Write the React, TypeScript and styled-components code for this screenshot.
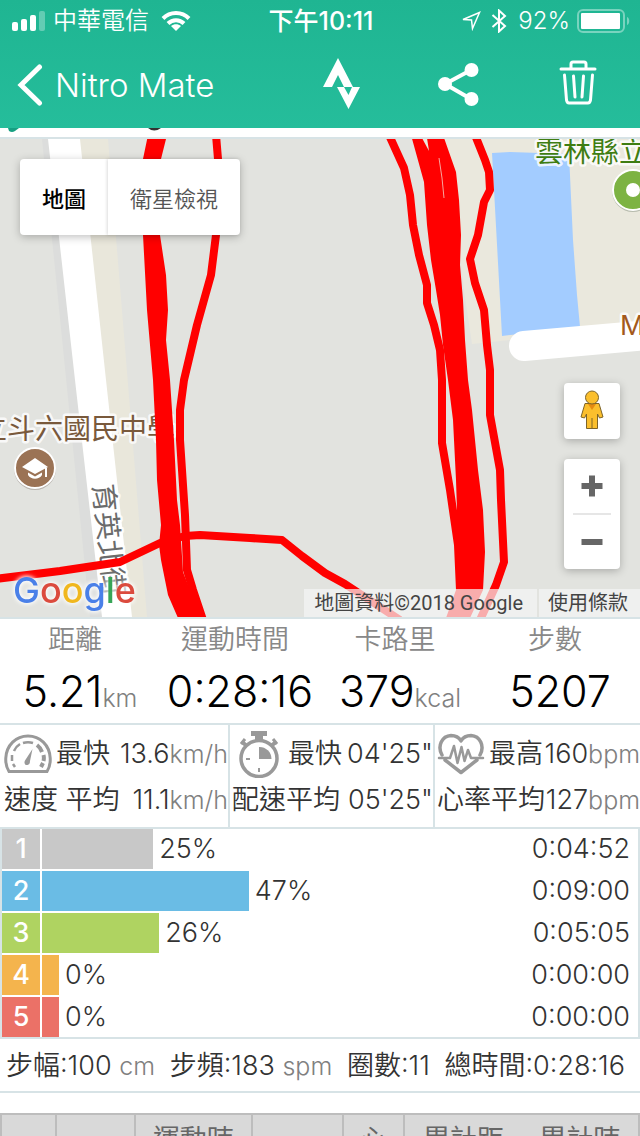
import React from "react";
import styled, { createGlobalStyle } from "styled-components";

const LINE = "#d7e3e6";
const LATIN = `Inter, "Noto Sans CJK TC", sans-serif`;

const GlobalStyle = createGlobalStyle`
  * { box-sizing: border-box; }
  body { margin: 0; background: #fff; color: #333; font-family: ${LATIN}; font-weight: 350; }
  button { border: 0; padding: 0; background: none; color: inherit; font: inherit; cursor: pointer; }
  svg { display: block; flex: none; }
`;

const Screen = styled.div`
  height: 100vh;
  overflow: hidden;
  display: flex;
  flex-direction: column;
  > * { flex: none; }
`;

const Header = styled.header`
  background: linear-gradient(#1fb592, #25bd9b);
  color: #fff;
  height: 128px;
`;

const StatusBar = styled.div`
  height: 42px;
  padding: 0 10px 0 12px;
  display: grid;
  grid-template-columns: 1fr auto 1fr;
  align-items: center;
  font-size: 24px;
  line-height: 40px;
`;

const StatusGroup = styled.div<{ $end?: boolean }>`
  display: flex;
  align-items: center;
  gap: 7px;
  justify-content: ${(p) => (p.$end ? "flex-end" : "flex-start")};
`;

const Clock = styled.time`
  font-size: 25px;
  font-weight: 500;
`;

const NavBar = styled.nav`
  height: 86px;
  padding: 0 43px 0 17px;
  display: flex;
  align-items: center;
  justify-content: space-between;
`;

const BackButton = styled.button`
  display: flex;
  align-items: center;
  gap: 12px;
  font-size: 33px;
  line-height: 40px;
`;

const NavActions = styled.div`
  display: flex;
  align-items: center;
  gap: 76px;
`;

const TitleStrip = styled.div`
  height: 11px;
  border-bottom: 2px solid ${LINE};
`;

const MapArea = styled.section`
  position: relative;
  height: 480px;
  overflow: hidden;
  border-bottom: 2px solid ${LINE};
  background: #e2e3df;
`;

const MapDrawing = styled.svg`
  width: 100%;
  height: 100%;
`;

const MapLabel = styled.text<{ $size: number }>`
  font-family: ${LATIN};
  font-size: ${(p) => p.$size}px;
  font-weight: 400;
  paint-order: stroke;
  stroke: rgba(255, 255, 255, 0.8);
  stroke-width: 5px;
  stroke-linejoin: round;
`;

const MapTypes = styled.div`
  position: absolute;
  top: 20px;
  left: 20px;
  display: flex;
  background: #fff;
  border-radius: 4px;
  box-shadow: 0 2px 8px rgba(0, 0, 0, 0.25);
`;

const MapTypeButton = styled.button<{ $active?: boolean }>`
  height: 76px;
  padding: 0 22px;
  font-size: 22px;
  font-weight: ${(p) => (p.$active ? 500 : 350)};
  color: ${(p) => (p.$active ? "#000" : "#555")};
  & + & { box-shadow: -1px 0 3px rgba(0, 0, 0, 0.14); }
`;

const MapControls = styled.div`
  position: absolute;
  right: 20px;
  bottom: 48px;
  width: 56px;
  display: flex;
  flex-direction: column;
  gap: 20px;
`;

const ControlCard = styled.div`
  background: #fff;
  border-radius: 4px;
  box-shadow: 0 2px 8px rgba(0, 0, 0, 0.25);
`;

const ControlButton = styled.button<{ $h: number }>`
  width: 100%;
  height: ${(p) => p.$h}px;
  display: flex;
  align-items: center;
  justify-content: center;
`;

const ControlDivider = styled.hr`
  margin: 0 9px;
  border: 0;
  height: 2px;
  background: #e6e6e6;
`;

const GoogleMark = styled.div`
  position: absolute;
  left: 13px;
  bottom: 5px;
  font-size: 36px;
  line-height: 44px;
  font-weight: 500;
  filter: drop-shadow(0 0 2px rgba(255, 255, 255, 0.9)) drop-shadow(0 0 2px rgba(255, 255, 255, 0.8));
`;

const Tint = styled.span<{ $c: string }>`
  color: ${(p) => p.$c};
`;

const Attribution = styled.div`
  position: absolute;
  right: 0;
  bottom: 0;
  display: flex;
  gap: 2px;
  font: 400 20px/28px Roboto, "Noto Sans CJK TC", sans-serif;
  color: #444;
`;

const Credit = styled.span`
  padding: 0 14px 0 10px;
  background: rgba(245, 245, 245, 0.7);
`;

const Terms = styled.a`
  padding: 0 12px 0 9px;
  background: rgba(245, 245, 245, 0.7);
  color: inherit;
  text-decoration: none;
`;

const Totals = styled.section`
  display: grid;
  grid-template-columns: repeat(4, 1fr);
  height: 106px;
  border-bottom: 2px solid ${LINE};
  text-align: center;
`;

const TotalLabel = styled.div`
  padding-right: 10px;
  font-size: 27px;
  line-height: 42px;
  color: #888;
`;

const TotalValue = styled.div`
  font-size: 43px;
  line-height: 60px;
  color: #000;
  white-space: nowrap;
`;

const Unit = styled.span`
  font-size: 25px;
  font-weight: 300;
  color: #808080;
`;

const Vitals = styled.section`
  display: grid;
  grid-template-columns: 228fr 205fr 207fr;
  height: 104px;
  border-bottom: 2px solid ${LINE};
`;

const Vital = styled.div`
  padding: 6px 0 0 4px;
  min-width: 0;
  & + & { border-left: 2px solid ${LINE}; padding-left: 2px; }
`;

const VitalRow = styled.div`
  display: flex;
  align-items: center;
  justify-content: space-between;
  height: 46px;
  font-size: 27px;
  line-height: 46px;
  white-space: nowrap;
`;

const VitalName = styled.span`
  display: flex;
  align-items: center;
  gap: 4px;
`;

const Zones = styled.section`
  padding: 0 0 0 2px;
  display: flex;
  flex-direction: column;
  gap: 2px;
  border: solid ${LINE};
  border-width: 0 2px 2px 0;
  box-shadow: inset 2px 0 ${LINE};
`;

const Zone = styled.div`
  height: 40px;
  display: grid;
  grid-template-columns: 38px 1fr auto;
  gap: 2px;
  font-size: 27px;
  line-height: 40px;
`;

const ZoneBadge = styled.span<{ $c: string }>`
  background: ${(p) => p.$c};
  color: #fff;
  font-weight: 500;
  text-align: center;
`;

const ZoneTrack = styled.div`
  display: flex;
  gap: 6px;
`;

const ZoneBar = styled.div<{ $c: string }>`
  min-width: 17px;
  background: ${(p) => p.$c};
`;

const ZoneTime = styled.span`
  padding-right: 8px;
`;

const Summary = styled.section`
  height: 54px;
  padding: 0 15px 0 6px;
  display: flex;
  justify-content: space-between;
  border-bottom: 2px solid ${LINE};
  font-size: 27px;
  line-height: 54px;
  white-space: nowrap;
`;

const LapTable = styled.table`
  width: 100%;
  margin-top: 20px;
  table-layout: fixed;
  border-collapse: separate;
  border-spacing: 0;
  background: #d9d9d9;
  border: 2px solid #bdbdbd;
`;

const LapHead = styled.th<{ $w: number; $open?: boolean }>`
  width: ${(p) => p.$w}%;
  height: 80px;
  padding: 5px 0 0;
  vertical-align: top;
  font-size: 27px;
  line-height: 40px;
  font-weight: 400;
  color: #666;
  border-right: ${(p) => (p.$open ? "0" : "2px solid #bdbdbd")};
`;

const zones = [
  { n: 1, color: "#c8c8c8", share: 25, bar: 22.8, time: "0:04:52" },
  { n: 2, color: "#6abce5", share: 47, bar: 42.4, time: "0:09:00" },
  { n: 3, color: "#afd361", share: 26, bar: 24, time: "0:05:05" },
  { n: 4, color: "#f4b44d", share: 0, bar: 0, time: "0:00:00" },
  { n: 5, color: "#eb7167", share: 0, bar: 0, time: "0:00:00" },
];

const totals = [
  { label: "距離", value: "5.21", unit: "km" },
  { label: "運動時間", value: "0:28:16" },
  { label: "卡路里", value: "379", unit: "kcal" },
  { label: "步數", value: "5207" },
];

const SpeedIcon = () => (
  <svg width="48" height="40" viewBox="0 0 48 40" fill="none" stroke="#999">
    <path d="M5 37.5H43C45.500 33.500 46.500 29 46.200 24C45.500 11 36 2 24 2S2.500 11 1.800 24C1.500 29 2.500 33.500 5 37.500Z" strokeWidth="3" />
    <path d="M9 30L11 33M8 21V27M10 17C11.500 13.500 13.500 11.500 16 10M19 9C22 8 26 8 29 9" strokeWidth="2.500" />
    <path d="M33 11C35 12.500 37 15 38 18M39.500 21C40 23 40 25 39.500 27M39 29L37 33" strokeWidth="4" />
    <path d="M28.500 15L21 26.500C19.500 29.500 21.500 31.500 23.500 31C25.500 30.500 26 29 26 27Z" fill="#999" stroke="none" />
  </svg>
);

const StopwatchIcon = () => (
  <svg width="52" height="48" viewBox="-6 0 52 48" fill="none" stroke="#999">
    <circle cx="21" cy="28.500" r="18" strokeWidth="3.500" />
    <path d="M13 1H29V6H25V10H17V6H13Z" fill="#999" stroke="none" />
    <path d="M4 12L9 16M38 12L33 16" strokeWidth="4" />
    <path d="M3 14L7 9M39 14L35 9" strokeWidth="3" />
    <path d="M21 17A12 12 0 0 1 33.500 29H21Z" fill="#999" stroke="none" />
    <path d="M8 29H12M21 38V42" strokeWidth="2" />
  </svg>
);

const HeartIcon = () => (
  <svg width="48" height="42" viewBox="0 0 48 42" fill="none" stroke="#999" strokeLinejoin="round" strokeLinecap="round">
    <path d="M5 22C0 13 5 3 14 2.500C18.500 2.500 22 4.500 24 8C26 4.500 30 2.500 34 2.500C43 3 48 13 43 22M8 27L24 39.500L40 27" strokeWidth="3.500" />
    <path d="M2 25H13L17 13L20.500 30L24.500 14L27.500 28L31 17L34 25H46" strokeWidth="2.500" />
  </svg>
);

const vitals = [
  { icon: <SpeedIcon />, top: "最快", bottom: "速度 平均", best: "13.6", avg: "11.1", unit: "km/h" },
  { icon: <StopwatchIcon />, top: "最快", bottom: "配速平均", best: "04'25\"", avg: "05'25\"", unit: "" },
  { icon: <HeartIcon />, top: "最高", bottom: "心率平均", best: "160", avg: "127", unit: "bpm" },
];

function RouteMap() {
  return (
    <MapDrawing viewBox="0 139 640 478" preserveAspectRatio="xMidYMid slice" role="img" aria-label="地圖">
      <rect x="0" y="139" width="640" height="478" fill="#e2e3df" />
      <path d="M42 139H50L104 617H90Z" fill="#dcdddc" />
      <path d="M78 139H108L147 617H130Z" fill="#e9e7db" />
      <path d="M48 139H80L106 380L132 617H102L75 380Z" fill="#fff" />
      <path d="M445 139H640V330L510 340L472 344L464 290Z" fill="#eae8dd" />
      <path d="M492 153L510 152L569 154L573 240L577 295L580 327L502 336Z" fill="#a3ccff" />
      <path d="M524 346L660 334" stroke="#fff" strokeWidth="30" strokeLinecap="round" />

      <MapLabel $size={28} x="-21" y="439" fill="#79593c">立斗六國民中學</MapLabel>
      <MapLabel $size={28} x="535" y="162" fill="#3f7d12">雲林縣立</MapLabel>
      <MapLabel $size={27} x="620" y="335" fill="#a35a1c">M</MapLabel>
      <MapLabel $size={28} x="0" y="0" fill="#6b6b6b" transform="translate(93 485) rotate(84)">育英北街</MapLabel>

      <circle cx="35" cy="469" r="21" fill="#b9b4ae" />
      <circle cx="35" cy="468" r="20" fill="#9b7355" stroke="#fff" strokeWidth="2" />
      <path d="M22 467L35 458L48 467L35 474ZM28 472.500L35 476.500L42 472.500V475C39 480 31 480 28 475ZM45 468H47V477H45Z" fill="#fff" />
      <circle cx="633" cy="191" r="21" fill="#b8bcae" />
      <circle cx="633" cy="190" r="20" fill="#7db343" stroke="#fff" strokeWidth="2" />
      <circle cx="633" cy="190" r="7" fill="#fff" />

      <path d="M148 135H167L161 159L160 235L166 275L168 310L166 340L170 380L174 440L177 500L180 525L183 572L190 590L206 618H178L168 595L161 560L159 545L161 525L157 480L156 440L153 380L147 310L143 235V159Z" fill="#f00" />
      <path d="M411 135L443 135L456 172L459 200L461 235L460 265L463 300L465 340L468 380L472 410L475 440L478 470L483 510L485 552L483 590L470 618H446L456 590L457 510L456 480L453 420L448 380L443 345L440 315L436 290L431 260L427 225L424 182Z" fill="#f00" />
      <path d="M422 138H427L429 151Z" fill="#eae8dd" />
      <path d="M439 158L442 178L444 198" fill="none" stroke="#f7a79f" strokeWidth="1" />
      <g fill="none" stroke="#f00" strokeWidth="8" strokeLinejoin="round">
        <path d="M216 135L218 159L216 235L211 275L197 325L184 380L180 410V440L185 515L187 570L193 590L203 620" />
        <path d="M-5 579L60 571L120 562L160 543L185 536L200 535L250 538L282 540L302 556L325 573L345 584L400 620" />
        <path d="M389 135L404 168L410 195L413 225L419 255L427 285V303L434 325L440 350L442 380V443L450 490L458 545L460 590" />
        <path d="M475 135L485 160L489 172L490 190L484 202L478 235L470 259L475 283L484 310L487 345L490 370V415L500 470L501 500L504 562L496 585L480 620" />
      </g>
    </MapDrawing>
  );
}

export default function App() {
  return (
    <Screen>
      <GlobalStyle />
      <Header>
        <StatusBar>
          <StatusGroup>
            <svg width="34" height="20" viewBox="0 0 34 20" fill="#fff">
              <rect y="11" width="6" height="9" rx="2" />
              <rect x="9" y="8" width="6" height="12" rx="2" />
              <rect x="18" y="4" width="6" height="16" rx="2" />
              <rect x="27" width="6" height="20" rx="2" opacity=".3" />
            </svg>
            中華電信
            <svg width="40" height="20" viewBox="-6 0 40 20" fill="none" stroke="#fff" strokeWidth="4">
              <path d="M1 7.500C8 .300 20 .300 27 7.500M6 12.500C10.500 8 17.500 8 22 12.500" />
              <path d="M9 15C12 12.500 16 12.500 19 15L14 20Z" fill="#fff" stroke="none" />
            </svg>
          </StatusGroup>
          <Clock>下午10:11</Clock>
          <StatusGroup $end>
            <svg width="24" height="20" viewBox="0 0 24 20" fill="none" stroke="#fff" strokeWidth="1.500" strokeLinejoin="miter">
              <path d="M3 8.500L19.500 1.500L12.500 17.500L11.500 9Z" />
            </svg>
            <svg width="20" height="24" viewBox="0 0 20 24" fill="none" stroke="#fff" strokeWidth="2">
              <path d="M1.500 6L14 17L8 22.500V1.500L14 7L1.500 18" />
            </svg>
            92%
            <svg width="53" height="24" viewBox="0 0 53 24" fill="#fff">
              <rect x="1" y="1" width="46" height="22" rx="5" fill="none" stroke="#fff" strokeWidth="2" opacity=".4" />
              <rect x="4" y="4" width="39" height="16" rx="1" />
              <path d="M50 8C53 9 53 15 50 16Z" opacity=".4" />
            </svg>
          </StatusGroup>
        </StatusBar>
        <NavBar>
          <BackButton>
            <svg width="26" height="44" viewBox="0 0 26 44" fill="none" stroke="#fff" strokeWidth="5" strokeLinecap="round" strokeLinejoin="miter">
              <path d="M22.500 4L4 22L22.500 40" />
            </svg>
            Nitro Mate
          </BackButton>
          <NavActions>
            <button aria-label="Strava">
              <svg width="38" height="58" viewBox="324 55 38 58" fill="#fff">
                <path d="M339 57L354 86H345L339 74L333 86H324ZM338 86H345L349.500 94L353 86H361L349.500 108Z" />
              </svg>
            </button>
            <button aria-label="分享">
              <svg width="46" height="48" viewBox="437 59 46 48" fill="#fff">
                <circle cx="445" cy="82" r="7" />
                <circle cx="471.500" cy="68" r="7" />
                <circle cx="471.500" cy="97" r="7" />
                <path d="M471 68L445 82L471 97" fill="none" stroke="#fff" strokeWidth="4" />
              </svg>
            </button>
            <button aria-label="刪除">
              <svg width="38" height="50" viewBox="559 59 38 50" fill="none" stroke="#fff" strokeWidth="3" strokeLinecap="round" strokeLinejoin="round">
                <path d="M561 68H595M571 67V63Q571 61 573 61H584Q586 61 586 63V67M564.500 74L566.500 99Q567 102 569 102H588Q590 102 590.500 99L592.500 74M573.500 75L575 96M583.500 75L582 96" />
              </svg>
            </button>
          </NavActions>
        </NavBar>
      </Header>
      <TitleStrip>
        <svg width="180" height="6" viewBox="0 0 180 6">
          <path d="M8 0H19L15 3Q12 5 9 3Z" fill="#17a082" />
          <path d="M148 0H161Q154 5 148 0Z" fill="#333" />
        </svg>
      </TitleStrip>

      <MapArea>
        <RouteMap />
        <MapTypes>
          <MapTypeButton $active>地圖</MapTypeButton>
          <MapTypeButton>衛星檢視</MapTypeButton>
        </MapTypes>
        <MapControls>
          <ControlCard>
            <ControlButton $h={56} aria-label="街景服務">
              <svg width="24" height="42" viewBox="0 0 24 42" fill="#fbbf2d" stroke="#7d6428" strokeWidth="1">
                <path d="M5 13.500H19L23 27L19.500 28L17.500 24V38.500H6.500V24L4.500 28L1 27Z" />
                <path d="M8 14H16L12 20Z" fill="#e58b12" stroke="none" />
                <path d="M12 28V38" />
                <circle cx="12" cy="7.500" r="6.500" />
              </svg>
            </ControlButton>
          </ControlCard>
          <ControlCard>
            <ControlButton $h={54} aria-label="放大">
              <svg width="22" height="22" viewBox="0 0 22 22" fill="#666">
                <path d="M8 0.500H14V8H21.500V14H14V21.500H8V14H0.500V8H8Z" />
              </svg>
            </ControlButton>
            <ControlDivider />
            <ControlButton $h={54} aria-label="縮小">
              <svg width="22" height="6" viewBox="0 0 22 6" fill="#666">
                <rect x="0.500" width="21" height="6" />
              </svg>
            </ControlButton>
          </ControlCard>
        </MapControls>
        <GoogleMark>
          <Tint $c="#4a80e8">G</Tint>
          <Tint $c="#db4b3e">o</Tint>
          <Tint $c="#f0b71e">o</Tint>
          <Tint $c="#4a80e8">g</Tint>
          <Tint $c="#38a557">l</Tint>
          <Tint $c="#db4b3e">e</Tint>
        </GoogleMark>
        <Attribution>
          <Credit>地圖資料©2018 Google</Credit>
          <Terms href="#terms">使用條款</Terms>
        </Attribution>
      </MapArea>

      <Totals>
        {totals.map((t) => (
          <div key={t.label}>
            <TotalLabel>{t.label}</TotalLabel>
            <TotalValue>
              {t.value}
              {t.unit && <Unit>{t.unit}</Unit>}
            </TotalValue>
          </div>
        ))}
      </Totals>

      <Vitals>
        {vitals.map((v) => (
          <Vital key={v.bottom}>
            <VitalRow>
              <VitalName>
                {v.icon}
                {v.top}
              </VitalName>
              <span>
                {v.best}
                <Unit>{v.unit}</Unit>
              </span>
            </VitalRow>
            <VitalRow>
              <VitalName>{v.bottom}</VitalName>
              <span>
                {v.avg}
                <Unit>{v.unit}</Unit>
              </span>
            </VitalRow>
          </Vital>
        ))}
      </Vitals>

      <Zones>
        {zones.map((z) => (
          <Zone key={z.n}>
            <ZoneBadge $c={z.color}>{z.n}</ZoneBadge>
            <ZoneTrack>
              <ZoneBar $c={z.color} style={{ width: `${z.bar}%` }} />
              <span>{z.share}%</span>
            </ZoneTrack>
            <ZoneTime>{z.time}</ZoneTime>
          </Zone>
        ))}
      </Zones>

      <Summary>
        <span>步幅:100 <Unit>cm</Unit></span>
        <span>步頻:183 <Unit>spm</Unit></span>
        <span>圈數:11</span>
        <span>總時間:0:28:16</span>
      </Summary>

      <LapTable>
        <thead>
          <tr>
            <LapHead $w={8.6} />
            <LapHead $w={12.4} />
            <LapHead $w={18.5} scope="col">運動時</LapHead>
            <LapHead $w={14.2} />
            <LapHead $w={9.7} scope="col">心</LapHead>
            <LapHead $w={18.3} $open scope="col">累計距</LapHead>
            <LapHead $w={18.3} $open scope="col">累計時</LapHead>
          </tr>
        </thead>
      </LapTable>
    </Screen>
  );
}
